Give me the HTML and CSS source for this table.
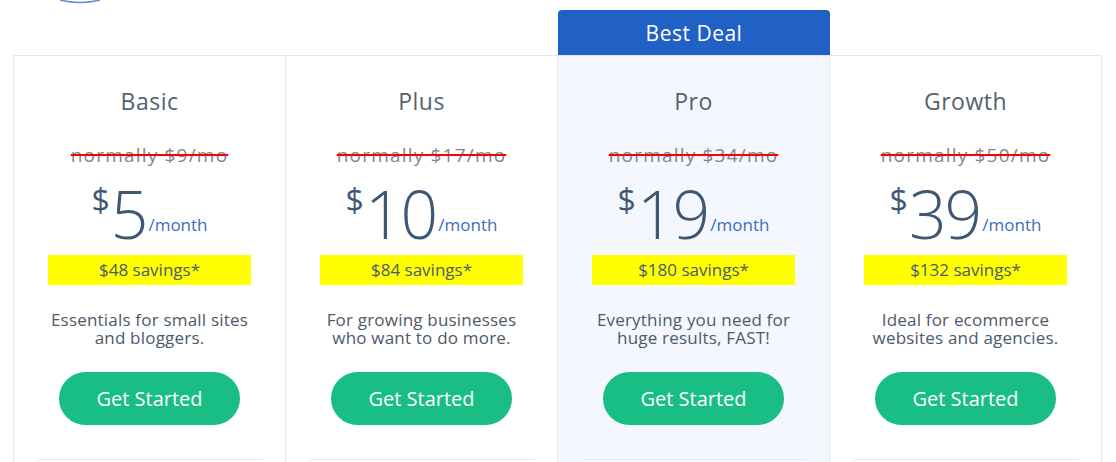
FILE: index.html
```html
<!DOCTYPE html>
<html lang="en">
<head>
<meta charset="utf-8">
<title>Pricing</title>
<link rel="stylesheet" href="styles.css">
</head>
<body>
<svg class="logo-arc" width="160" height="6" viewBox="0 0 160 6" aria-hidden="true">
  <path d="M60 0 Q80 5 100 0" fill="none" stroke="#5a8ad6" stroke-width="1.6"/>
</svg>
<main class="plans">
  <section class="plan">
    <h2 class="plan-name">Basic</h2>
    <p class="was">normally $9/mo</p>
    <div class="price"><span class="cur">$</span><span class="amt">5</span><span class="per">/month</span></div>
    <div class="save">$48 savings*</div>
    <p class="desc"><span class="line">Essentials for small sites</span><span class="line">and bloggers.</span></p>
    <a class="btn" href="#">Get Started</a>
    <div class="rule"></div>
  </section>
  <section class="plan">
    <h2 class="plan-name">Plus</h2>
    <p class="was">normally $17/mo</p>
    <div class="price"><span class="cur">$</span><span class="amt">10</span><span class="per">/month</span></div>
    <div class="save">$84 savings*</div>
    <p class="desc"><span class="line">For growing businesses</span><span class="line">who want to do more.</span></p>
    <a class="btn" href="#">Get Started</a>
    <div class="rule"></div>
  </section>
  <section class="plan plan-featured">
    <div class="badge">Best Deal</div>
    <h2 class="plan-name">Pro</h2>
    <p class="was">normally $34/mo</p>
    <div class="price"><span class="cur">$</span><span class="amt">19</span><span class="per">/month</span></div>
    <div class="save">$180 savings*</div>
    <p class="desc"><span class="line">Everything you need for</span><span class="line">huge results, FAST!</span></p>
    <a class="btn" href="#">Get Started</a>
    <div class="rule"></div>
  </section>
  <section class="plan">
    <h2 class="plan-name">Growth</h2>
    <p class="was">normally $50/mo</p>
    <div class="price"><span class="cur">$</span><span class="amt">39</span><span class="per">/month</span></div>
    <div class="save">$132 savings*</div>
    <p class="desc"><span class="line">Ideal for ecommerce</span><span class="line">websites and agencies.</span></p>
    <a class="btn" href="#">Get Started</a>
    <div class="rule"></div>
  </section>
</main>
</body>
</html>
```
FILE: styles.css
```css
* { box-sizing: border-box; }
html, body { margin: 0; padding: 0; background: #fff; }
body {
  font-family: "Open Sans", "Lato", sans-serif;
  color: #4c5a6a;
  position: relative;
  overflow: hidden;
  height: 462px;
}
.logo-arc { position: absolute; left: 0; top: 0; }
.plans {
  margin: 55px 0 0 13px;
  width: 1089px;
  display: grid;
  grid-template-columns: repeat(4, 272px);
  border-top: 1px solid #e4e8f0;
  border-left: 1px solid #e4e8f0;
}
.plan {
  position: relative;
  border-right: 1px solid #e4e8f0;
  padding: 32px 34px 0 34px;
  display: flex;
  flex-direction: column;
  align-items: center;
  height: 420px;
}
.plan-featured { background: #f4f7fe; }
.badge {
  position: absolute;
  left: 0;
  right: -1px;
  top: -46px;
  height: 45px;
  background: #2160c4;
  color: #fff;
  border-radius: 4px 4px 0 0;
  font-size: 21px;
  font-weight: 500;
  letter-spacing: 0.5px;
  display: flex;
  align-items: center;
  justify-content: center;
}
.plan-name {
  margin: 0;
  font-size: 23px;
  line-height: 26px;
  font-weight: 400;
  color: #55626f;
  letter-spacing: 0.5px;
}
.was {
  margin: 30px 0 0;
  font-size: 19px;
  line-height: 22px;
  color: #7b8593;
  letter-spacing: 1.2px;
  text-decoration: line-through;
  text-decoration-color: #ff0000;
  text-decoration-thickness: 2px;
}
.price {
  margin-top: 13px;
  height: 76px;
  display: flex;
  align-items: flex-start;
  justify-content: center;
  color: #3e5873;
}
.cur {
  font-size: 32px;
  line-height: 36px;
  margin-top: 3px;
  font-weight: 400;
}
.amt {
  font-size: 66px;
  line-height: 69px;
  font-weight: 300;
  letter-spacing: -2px;
  margin-left: 1px;
}
.per {
  align-self: flex-end;
  font-size: 17px;
  line-height: 22px;
  margin-bottom: 19px;
  margin-left: 2px;
  color: #3b6cc4;
}
.save {
  width: 100%;
  height: 30px;
  background: #ffff00;
  font-size: 17px;
  line-height: 30px;
  text-align: center;
  color: #4c5a6a;
}
.desc {
  margin: 26px 0 0;
  font-size: 17px;
  letter-spacing: 0.2px;
  text-align: center;
  color: #4c5a6a;
  display: flex;
  flex-direction: column;
  align-items: center;
}
.line {
  display: block;
  line-height: 18px;
  height: 18px;
  white-space: nowrap;
}
.btn {
  margin-top: 25px;
  width: 181px;
  height: 53px;
  border-radius: 27px;
  background: #19be84;
  color: #fff;
  text-decoration: none;
  font-size: 20px;
  display: flex;
  align-items: center;
  justify-content: center;
}
.rule {
  margin-top: 34px;
  width: 226px;
  border-top: 1px solid #e6ebf3;
}
```
